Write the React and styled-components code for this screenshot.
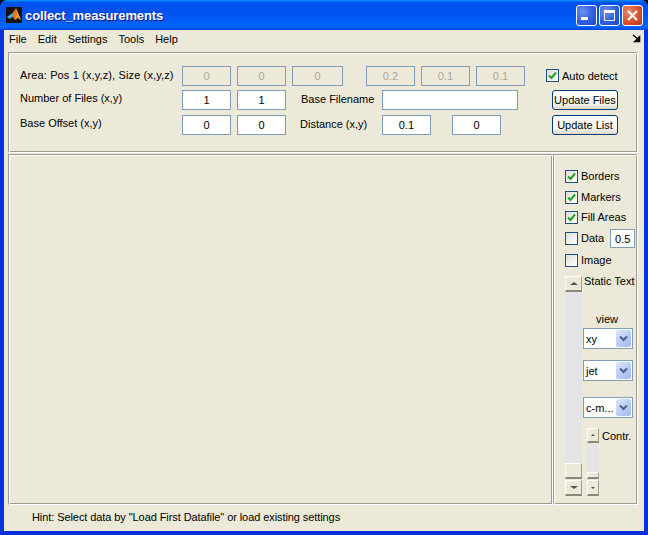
import styled, { createGlobalStyle } from 'styled-components'

const GlobalStyle = createGlobalStyle`
  html, body {
    margin: 0;
    padding: 0;
    background: #000;
  }
  * {
    box-sizing: border-box;
  }
`

const Window = styled.div`
  width: 648px;
  height: 535px;
  display: flex;
  flex-direction: column;
  background: #0831d9;
  border-radius: 7px 7px 0 0;
  overflow: hidden;
  font-family: "Liberation Sans", Arial, sans-serif;
  font-size: 11px;
  color: #000;
`

const TitleBar = styled.div`
  height: 30px;
  flex: none;
  display: flex;
  align-items: center;
  padding: 0 5px 0 6px;
  background: linear-gradient(180deg, #0997ff 0%, #0053ee 8%, #0050ee 40%, #0066ff 88%, #005bff 93%, #003dd7 100%);
`

const TitleText = styled.span`
  margin-left: 3px;
  font-size: 13px;
  font-weight: bold;
  letter-spacing: -0.1px;
  color: #fff;
  text-shadow: 1px 1px 0 #0f1089;
  flex: 1;
`

const CaptionBtn = styled.div`
  width: 21px;
  height: 21px;
  margin-left: 2px;
  border: 1px solid #fff;
  border-radius: 3px;
  display: flex;
  align-items: center;
  justify-content: center;
  background: ${props =>
    props.$close
      ? 'radial-gradient(circle at 30% 30%, #e88a6a, #d9512c 55%, #b9381a)'
      : 'radial-gradient(circle at 30% 30%, #6d92f0, #2f5fe0 55%, #1f45c5)'};
`

const Body = styled.div`
  flex: 1;
  margin: 0 4px 4px;
  display: flex;
  flex-direction: column;
  background: #ece9d8;
`

const MenuBar = styled.div`
  height: 19px;
  flex: none;
  display: flex;
  align-items: center;
  padding: 0 0 2px 5px;
  font-size: 11px;
`

const MenuItem = styled.span`
  margin-right: 11px;
`

const DockArrow = styled.svg`
  margin-left: auto;
  margin-right: 3px;
`

// etched frame: grey then white on the top/left, the other way round on the bottom/right
const Panel = styled.div`
  border-style: solid;
  border-width: 1px;
  border-color: #9d9c93 #fff #fff #9d9c93;
  box-shadow: inset 1px 1px 0 #fff, inset -1px -1px 0 #9d9c93;
`

const TopPanel = styled(Panel)`
  height: 101px;
  margin: 3px 0 0 4px;
  width: 630px;
  padding: 13px 0 0 11px;
  display: flex;
  flex-direction: column;
`

const TopRow = styled.div`
  height: ${props => props.$h}px;
  flex: none;
  display: flex;
  align-items: flex-start;
`

const FieldLabel = styled.span`
  width: ${props => props.$w}px;
  flex: none;
  padding-top: ${props => props.$top ?? 2}px;
  white-space: nowrap;
  letter-spacing: ${props => props.$ls ?? 0}px;
`

const Field = styled.div`
  width: ${props => props.$w ?? 49}px;
  height: 20px;
  flex: none;
  margin-right: ${props => props.$mr ?? 6}px;
  border: 1px solid #7f9db9;
  background: ${props => (props.$off ? '#ece9d8' : '#fff')};
  color: ${props => (props.$off ? '#aca899' : '#000')};
  display: flex;
  align-items: center;
  justify-content: center;
  font-size: 11px;
`

const PushBtn = styled.div`
  width: 66px;
  height: 20px;
  flex: none;
  border: 1px solid #003c74;
  border-radius: 3px;
  background: linear-gradient(180deg, #fff 0%, #f5f4ee 70%, #dcd8ca 100%);
  display: flex;
  align-items: center;
  justify-content: center;
  font-size: 11px;
`

const CheckRow = styled.div`
  display: flex;
  align-items: center;
  height: 13px;
  margin-top: ${props => props.$mt ?? 0}px;
`

const CheckLabel = styled.span`
  margin-bottom: 2px;
`

const Box = styled.div`
  width: 13px;
  height: 13px;
  flex: none;
  border: 1px solid #1c5180;
  background: linear-gradient(135deg, #dcdcd7 0%, #f6f6f3 70%, #fff 100%);
  display: flex;
  align-items: center;
  justify-content: center;
  margin-right: 3px;
`

const Main = styled.div`
  display: flex;
  margin: 1px 0 0 4px;
  height: 351px;
  width: 630px;
`

const PlotPanel = styled(Panel)`
  width: 545px;
  flex: none;
`

const SidePanel = styled(Panel)`
  width: 85px;
  flex: none;
  padding: 15px 0 0 11px;
  display: flex;
  flex-direction: column;
`

const SmallField = styled(Field)`
  width: 25px;
  height: 19px;
  margin: 0 0 0 6px;
`

const SideLower = styled.div`
  display: flex;
  margin-top: 9px;
`

const ScrollTrack = styled.div`
  width: ${props => props.$w}px;
  height: ${props => props.$h}px;
  flex: none;
  display: flex;
  flex-direction: column;
  background: #e4e4e4;
`

const ScrollFill = styled.div`
  flex: 1;
`

const ScrollBtn = styled.div`
  height: ${props => props.$h}px;
  flex: none;
  display: flex;
  align-items: center;
  justify-content: center;
  background: #ece9d8;
  border-top: 1px solid #fff;
  border-left: 1px solid #fff;
  border-right: 1px solid #9d9c93;
  border-bottom: 2px solid #8a8878;
`

const Thumb = styled(ScrollBtn)`
  margin-bottom: 1px;
`

const Arrow = styled.div`
  width: 0;
  height: 0;
  border-left: ${props => props.$s}px solid transparent;
  border-right: ${props => props.$s}px solid transparent;
  ${props => (props.$up ? 'border-bottom' : 'border-top')}: ${props => props.$s - (props.$s > 2 ? 1 : 0)}px solid #55544c;
`

const SideColumn = styled.div`
  width: 56px;
  flex: none;
  margin-left: 1px;
  display: flex;
  flex-direction: column;
`

const StaticText = styled.div`
  height: 38px;
  margin-top: -1px;
  padding: 0 0 0 1px;
  white-space: nowrap;
`

const ViewLabel = styled.div`
  width: 48px;
  height: 15px;
  text-align: center;
`

const Select = styled.div`
  width: 50px;
  height: 21px;
  margin-top: ${props => props.$mt ?? 0}px;
  border: 1px solid #7f9db9;
  background: #fff;
  display: flex;
  align-items: center;
  padding-left: 2px;
`

const SelectLabel = styled.span`
  flex: 1;
`

const SelectBtn = styled.div`
  width: 15px;
  height: 17px;
  margin-right: 1px;
  border-radius: 2px;
  background: linear-gradient(135deg, #dbe5fb 0%, #b5c9f7 60%, #a3b9ee 100%);
  display: flex;
  align-items: center;
  justify-content: center;
`

const ContrastRow = styled.div`
  display: flex;
  margin: 10px 0 0 4px;
`

const ContrastLabel = styled.span`
  margin: 2px 0 0 3px;
  white-space: nowrap;
`

const StatusBar = styled.div`
  flex: 1;
  padding: 6px 0 0 28px;
  font-size: 11px;
  letter-spacing: -0.08px;
  white-space: nowrap;
`

function CheckMark() {
  return (
    <svg width="9" height="9" viewBox="0 0 9 9">
      <path d="M1 4.5 L3.5 7 L8 1.5" fill="none" stroke="#21a121" strokeWidth="2" />
    </svg>
  )
}

function Check({ checked, label, mt, children }) {
  return (
    <CheckRow $mt={mt}>
      <Box>{checked && <CheckMark />}</Box>
      <CheckLabel>{label}</CheckLabel>
      {children}
    </CheckRow>
  )
}

function Dropdown({ label, mt }) {
  return (
    <Select $mt={mt}>
      <SelectLabel>{label}</SelectLabel>
      <SelectBtn>
        <svg width="9" height="7" viewBox="0 0 9 7">
          <path d="M1 1.5 L4.5 5 L8 1.5" fill="none" stroke="#4d6185" strokeWidth="2" />
        </svg>
      </SelectBtn>
    </Select>
  )
}

function MatlabIcon() {
  return (
    <svg width="16" height="16" viewBox="0 0 16 16">
      <rect width="16" height="16" fill="#111" />
      <path d="M2 10 L6 7 L10 1 L12 6 L15 13 L11.5 10.5 L9 13 L6.5 9.5 Z" fill="#e8701a" />
      <path d="M10 1 L11 7 L9 13 L12 10.5 L15 13 L12 6 Z" fill="#f4a32a" />
      <path d="M1 10 L6 6.5 L8 5 L6.5 9.5 L4 12 Z" fill="#4aa8dc" />
    </svg>
  )
}

export default function App() {
  return (
    <>
      <GlobalStyle />
      <Window>
        <TitleBar>
          <MatlabIcon />
          <TitleText>collect_measurements</TitleText>
          <CaptionBtn>
            <svg width="13" height="13" viewBox="0 0 13 13">
              <rect x="1" y="8" width="7" height="3" fill="#fff" />
            </svg>
          </CaptionBtn>
          <CaptionBtn>
            <svg width="13" height="13" viewBox="0 0 13 13">
              <path d="M1.5 3 H11.5 V11.5 H1.5 Z" fill="none" stroke="#fff" />
              <rect x="1" y="1" width="11" height="3" fill="#fff" />
            </svg>
          </CaptionBtn>
          <CaptionBtn $close>
            <svg width="13" height="13" viewBox="0 0 13 13">
              <path d="M2 2 L11 11 M11 2 L2 11" stroke="#fff" strokeWidth="2.2" />
            </svg>
          </CaptionBtn>
        </TitleBar>
        <Body>
          <MenuBar>
            <MenuItem>File</MenuItem>
            <MenuItem>Edit</MenuItem>
            <MenuItem>Settings</MenuItem>
            <MenuItem>Tools</MenuItem>
            <MenuItem>Help</MenuItem>
            <DockArrow width="9" height="9" viewBox="0 0 9 9">
              <path d="M1 1 L6 5 M7.5 3 V7.5 H3 Z" stroke="#000" strokeWidth="1.6" fill="#000" />
            </DockArrow>
          </MenuBar>
          <TopPanel>
            <TopRow $h={24}>
              <FieldLabel $w={162} $top={3} $ls={0.13}>Area: Pos 1 (x,y,z), Size (x,y,z)</FieldLabel>
              <Field $off>0</Field>
              <Field $off>0</Field>
              <Field $off $w={51} $mr={23}>0</Field>
              <Field $off>0.2</Field>
              <Field $off>0.1</Field>
              <Field $off $mr={21}>0.1</Field>
              <CheckRow $mt={3}>
                <Box><CheckMark /></Box>
                <span>Auto detect</span>
              </CheckRow>
            </TopRow>
            <TopRow $h={25}>
              <FieldLabel $w={162}>Number of Files (x,y)</FieldLabel>
              <Field>1</Field>
              <Field $mr={15}>1</Field>
              <FieldLabel $w={81} $top={3}>Base Filename</FieldLabel>
              <Field $w={136} $mr={34} />
              <PushBtn>Update Files</PushBtn>
            </TopRow>
            <TopRow $h={24}>
              <FieldLabel $w={162}>Base Offset (x,y)</FieldLabel>
              <Field>0</Field>
              <Field $mr={14}>0</Field>
              <FieldLabel $w={82} $top={3}>Distance (x,y)</FieldLabel>
              <Field $mr={21}>0.1</Field>
              <Field $mr={51}>0</Field>
              <PushBtn>Update List</PushBtn>
            </TopRow>
          </TopPanel>
          <Main>
            <PlotPanel />
            <SidePanel>
              <Check checked label="Borders" />
              <Check checked label="Markers" mt={8} />
              <Check checked label="Fill Areas" mt={7} />
              <Check label="Data" mt={8}>
                <SmallField>0.5</SmallField>
              </Check>
              <Check label="Image" mt={9} />
              <SideLower>
                <ScrollTrack $w={17} $h={220}>
                  <ScrollBtn $h={16}><Arrow $up $s={4} /></ScrollBtn>
                  <ScrollFill />
                  <Thumb $h={16} />
                  <ScrollBtn $h={16}><Arrow $s={4} /></ScrollBtn>
                </ScrollTrack>
                <SideColumn>
                  <StaticText>Static Text</StaticText>
                  <ViewLabel>view</ViewLabel>
                  <Dropdown label="xy" />
                  <Dropdown label="jet" mt={11} />
                  <Dropdown label="c-m..." mt={16} />
                  <ContrastRow>
                    <ScrollTrack $w={12} $h={68}>
                      <ScrollBtn $h={15}><Arrow $up $s={2} /></ScrollBtn>
                      <ScrollFill />
                      <Thumb $h={7} />
                      <ScrollBtn $h={16}><Arrow $s={2} /></ScrollBtn>
                    </ScrollTrack>
                    <ContrastLabel>Contr.</ContrastLabel>
                  </ContrastRow>
                </SideColumn>
              </SideLower>
            </SidePanel>
          </Main>
          <StatusBar>Hint: Select data by "Load First Datafile" or load existing settings</StatusBar>
        </Body>
      </Window>
    </>
  )
}
